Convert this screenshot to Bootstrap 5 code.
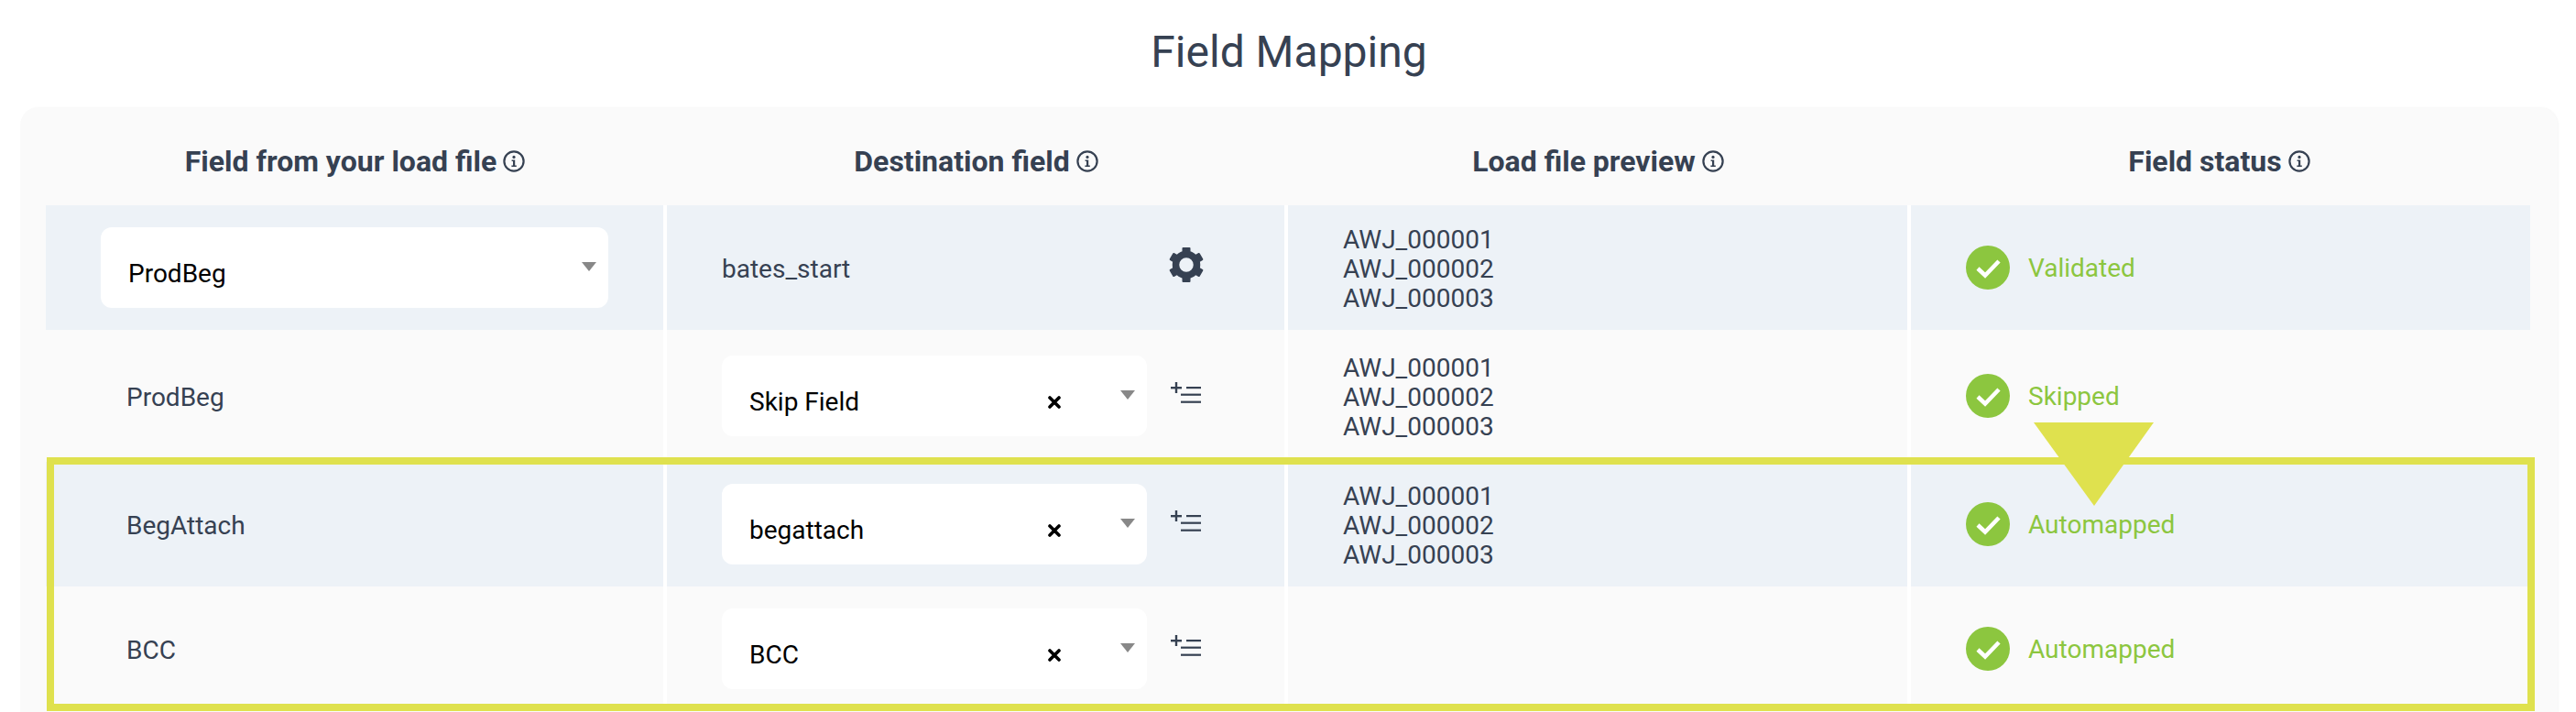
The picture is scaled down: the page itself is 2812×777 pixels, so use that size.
<!DOCTYPE html>
<html lang="en">
<head>
<meta charset="UTF-8">
<title>Field Mapping</title>
<link href="https://cdn.jsdelivr.net/npm/bootstrap@5.3.0/dist/css/bootstrap.min.css" rel="stylesheet">
<style>
    html, body { height: 777px; overflow: hidden; }
    body { background: #fff; font-family: Roboto, "Liberation Sans", sans-serif; color: #364152; position: relative; }
    .page-wrap { padding: 0 20px 0 22px; }
    .page-title { font-family: Roboto, sans-serif; font-size: 48px; font-weight: 400; line-height: 56px; height: 117px; padding-top: 29px; margin: 0; color: #364152; }
    .map-card { background: #fafafa; border: 0; border-radius: 20px 20px 0 0; padding: 0 30px 1px 28px; box-shadow: 1px 0 2px rgba(0,0,0,.04); }
    .head-row { height: 107px; }
    .head-cell { font-size: 32px; font-weight: 700; padding: 10px 3px 0 0; gap: 7px; color: #364152; }
    .map-row { font-size: 28px; line-height: 32px; color: #364152; }
    .row-tall { height: 144px; }
    .row-norm { height: 136px; }
    .row-tint .map-cell { background: #edf2f7; }
    .map-cell { border-right: 4px solid #fff; height: 100%; }
    .map-cell-last { border-right: 0; }
    .col-third { width: calc(25% + 2px); }
    .col-fourth { width: calc(25% - 2px); }
    .pad-label { padding-left: 88px; padding-top: 3px; }
    .pad-field { padding-left: 60px; padding-right: 60px; }
    .text-drop { padding-top: 3px; }
    .pick-box { background: #fff; border-radius: 12px; height: 88px; padding: 0 13px 0 30px; color: #000; font-size: 28px; }
    .pick-wide { width: 554px; }
    .pick-narrow { width: 464px; }
    .pick-text { padding-top: 14px; }
    .pick-clear { margin-right: 65px; margin-top: 14px; display: block; }
    .pick-arrow { width: 0; height: 0; border-left: 8px solid transparent; border-right: 8px solid transparent; border-top: 10px solid #888; margin-top: -2px; }
    .add-list { margin-left: 26px; margin-top: -6px; display: block; }
    .gear-icon { margin-left: auto; margin-right: 28px; margin-top: -6px; display: block; }
    .status-text { color: #8cc63f; padding-top: 1px; margin-left: 20px; }
    .mark-frame { position: absolute; left: 51px; top: 499px; width: 2716px; height: 277px; border: 8px solid #dfe14e; pointer-events: none; }
    .mark-arrow { position: absolute; left: 2220px; top: 461px; display: block; pointer-events: none; }
</style>
</head>
<body>

<div class="page-wrap">
    <h1 class="page-title text-center">Field Mapping</h1>

    <div class="card map-card">
        <div class="row g-0 head-row">
            <div class="col-3 head-cell d-flex align-items-center justify-content-center">Field from your load file
                <svg width="24" height="24" viewBox="0 0 24 24"><use href="#info"/></svg></div>
            <div class="col-3 head-cell d-flex align-items-center justify-content-center">Destination field
                <svg width="24" height="24" viewBox="0 0 24 24"><use href="#info"/></svg></div>
            <div class="col-third head-cell d-flex align-items-center justify-content-center">Load file preview
                <svg width="24" height="24" viewBox="0 0 24 24"><use href="#info"/></svg></div>
            <div class="col-fourth head-cell d-flex align-items-center justify-content-center">Field status
                <svg width="24" height="24" viewBox="0 0 24 24"><use href="#info"/></svg></div>
        </div>

        <div class="row g-0 map-row row-norm row-tint">
            <div class="col-3 map-cell pad-field d-flex align-items-center">
                <div class="pick-box pick-wide d-flex align-items-center justify-content-between">
                    <span class="pick-text">ProdBeg</span>
                    <span class="pick-arrow"></span>
                </div>
            </div>
            <div class="col-3 map-cell pad-field d-flex align-items-center">
                <span class="text-drop">bates_start</span>
                <svg class="gear-icon" width="38" height="38" viewBox="0 0 38 38"><use href="#gear"/></svg>
            </div>
            <div class="col-third map-cell pad-field d-flex align-items-center">
                <div class="text-drop">AWJ_000001<br>AWJ_000002<br>AWJ_000003</div>
            </div>
            <div class="col-fourth map-cell map-cell-last pad-field d-flex align-items-center">
                <svg width="48" height="48" viewBox="0 0 48 48"><use href="#okay"/></svg>
                <span class="status-text">Validated</span>
            </div>
        </div>

        <div class="row g-0 map-row row-tall">
            <div class="col-3 map-cell pad-label d-flex align-items-center">ProdBeg</div>
            <div class="col-3 map-cell pad-field d-flex align-items-center">
                <div class="pick-box pick-narrow flex-shrink-0 d-flex align-items-center">
                    <span class="pick-text flex-grow-1">Skip Field</span>
                    <svg class="pick-clear" width="14" height="14" viewBox="0 0 14 14"><use href="#clear"/></svg>
                    <span class="pick-arrow"></span>
                </div>
                <svg class="add-list flex-shrink-0" width="34" height="24" viewBox="0 0 34 24"><use href="#addlist"/></svg>
            </div>
            <div class="col-third map-cell pad-field d-flex align-items-center">
                <div class="text-drop">AWJ_000001<br>AWJ_000002<br>AWJ_000003</div>
            </div>
            <div class="col-fourth map-cell map-cell-last pad-field d-flex align-items-center">
                <svg width="48" height="48" viewBox="0 0 48 48"><use href="#okay"/></svg>
                <span class="status-text">Skipped</span>
            </div>
        </div>

        <div class="row g-0 map-row row-norm row-tint">
            <div class="col-3 map-cell pad-label d-flex align-items-center">BegAttach</div>
            <div class="col-3 map-cell pad-field d-flex align-items-center">
                <div class="pick-box pick-narrow flex-shrink-0 d-flex align-items-center">
                    <span class="pick-text flex-grow-1">begattach</span>
                    <svg class="pick-clear" width="14" height="14" viewBox="0 0 14 14"><use href="#clear"/></svg>
                    <span class="pick-arrow"></span>
                </div>
                <svg class="add-list flex-shrink-0" width="34" height="24" viewBox="0 0 34 24"><use href="#addlist"/></svg>
            </div>
            <div class="col-third map-cell pad-field d-flex align-items-center">
                <div class="text-drop">AWJ_000001<br>AWJ_000002<br>AWJ_000003</div>
            </div>
            <div class="col-fourth map-cell map-cell-last pad-field d-flex align-items-center">
                <svg width="48" height="48" viewBox="0 0 48 48"><use href="#okay"/></svg>
                <span class="status-text">Automapped</span>
            </div>
        </div>

        <div class="row g-0 map-row row-norm">
            <div class="col-3 map-cell pad-label d-flex align-items-center">BCC</div>
            <div class="col-3 map-cell pad-field d-flex align-items-center">
                <div class="pick-box pick-narrow flex-shrink-0 d-flex align-items-center">
                    <span class="pick-text flex-grow-1">BCC</span>
                    <svg class="pick-clear" width="14" height="14" viewBox="0 0 14 14"><use href="#clear"/></svg>
                    <span class="pick-arrow"></span>
                </div>
                <svg class="add-list flex-shrink-0" width="34" height="24" viewBox="0 0 34 24"><use href="#addlist"/></svg>
            </div>
            <div class="col-third map-cell pad-field d-flex align-items-center"></div>
            <div class="col-fourth map-cell map-cell-last pad-field d-flex align-items-center">
                <svg width="48" height="48" viewBox="0 0 48 48"><use href="#okay"/></svg>
                <span class="status-text">Automapped</span>
            </div>
        </div>
    </div>
</div>

<!-- annotation drawn over the table -->
<div class="mark-frame"></div>
<svg class="mark-arrow" width="132" height="92" viewBox="0 0 132 92"><polygon points="0,0 131,0 66,91" fill="#dfe14e"/></svg>

<svg width="0" height="0" class="position-absolute">
    <defs>
        <g id="info">
            <circle cx="12" cy="12" r="10.6" fill="none" stroke="#364152" stroke-width="2.2"/>
            <circle cx="12" cy="7.4" r="1.6" fill="#364152"/>
            <path d="M9.6 10.4h3.6v6h1.6v1.6H9.4v-1.6h1.6v-4.4H9.6z" fill="#364152"/>
        </g>
        <g id="gear" fill="#364152">
            <circle cx="19" cy="19" r="11.5" fill="none" stroke="#364152" stroke-width="7.5"/>
            <rect x="14.5" y="0" width="9" height="8" rx="1"/>
            <rect x="14.5" y="0" width="9" height="8" rx="1" transform="rotate(60 19 19)"/>
            <rect x="14.5" y="0" width="9" height="8" rx="1" transform="rotate(120 19 19)"/>
            <rect x="14.5" y="0" width="9" height="8" rx="1" transform="rotate(180 19 19)"/>
            <rect x="14.5" y="0" width="9" height="8" rx="1" transform="rotate(240 19 19)"/>
            <rect x="14.5" y="0" width="9" height="8" rx="1" transform="rotate(300 19 19)"/>
        </g>
        <g id="clear">
            <path d="M2 2L12 12M12 2L2 12" stroke="#000" stroke-width="3.6" stroke-linecap="round"/>
        </g>
        <g id="addlist" fill="#364152">
            <rect x="0" y="5" width="12" height="2.4"/>
            <rect x="4.8" y="0" width="2.4" height="12"/>
            <rect x="17" y="5" width="16" height="2.2"/>
            <rect x="11" y="12.6" width="22" height="2.2"/>
            <rect x="11" y="20.6" width="22" height="2.2"/>
        </g>
        <g id="okay">
            <circle cx="24" cy="24" r="24" fill="#8cc63f"/>
            <path d="M13 25L21 32.5L36 17" fill="none" stroke="#fff" stroke-width="4.5"/>
        </g>
    </defs>
</svg>

<script src="https://cdn.jsdelivr.net/npm/bootstrap@5.3.0/dist/js/bootstrap.bundle.min.js"></script>
</body>
</html>
